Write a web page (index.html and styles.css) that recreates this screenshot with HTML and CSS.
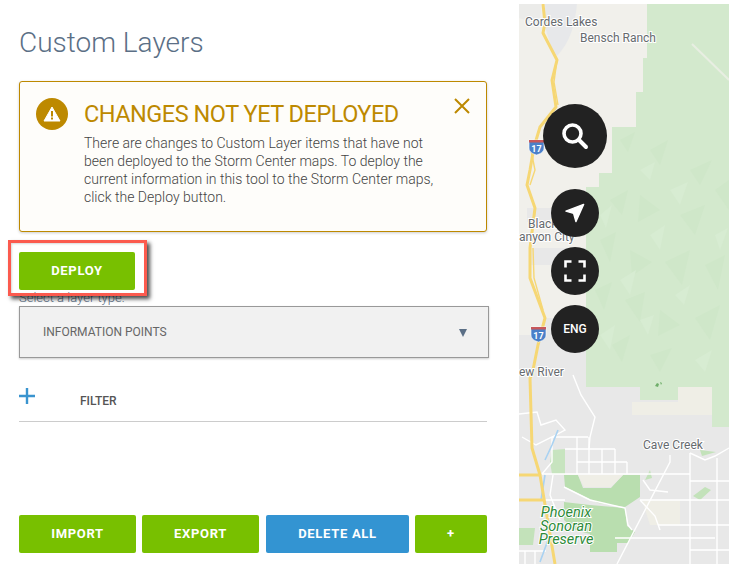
FILE: index.html
```html
<!DOCTYPE html>
<html>
<head>
  <title>Custom Layers</title>
  <link rel="stylesheet" href="styles.css">
</head>
<body>

<div class="page">
  <div class="panel">
    <h1>Custom Layers</h1>

    <div class="alert">
      <div class="alert-icon">
        <svg width="18" height="16" viewBox="0 0 18 16"><path d="M9 1 17 15H1Z" fill="#fff" stroke="#fff" stroke-linejoin="round"/><rect x="8" y="5" width="2" height="5.5" fill="#bd8900"/><rect x="8" y="11.5" width="2" height="2" fill="#bd8900"/></svg>
      </div>
      <div class="alert-body">
        <h2>CHANGES NOT YET DEPLOYED</h2>
        <p>There are changes to Custom Layer items that have not been deployed to the Storm Center maps. To deploy the current information in this tool to the Storm Center maps, click the Deploy button.</p>
      </div>
      <svg class="alert-close" width="16" height="16" viewBox="0 0 16 16"><path d="M1 1 15 15M15 1 1 15" stroke="#bd8900" stroke-width="2" fill="none"/></svg>
    </div>

    <div class="deploy-row">
      <button class="btn btn-deploy">DEPLOY</button>
    </div>

    <label class="select-label">Select a layer type:</label>
    <div class="highlight"></div>
    <div class="select">
      <span>INFORMATION POINTS</span>
      <span class="arrow"></span>
    </div>

    <div class="filter-row">
      <svg class="add" width="16" height="16" viewBox="0 0 16 16"><path d="M8 0V16M0 8H16" stroke="#3a94cf" stroke-width="2.4"/></svg>
      <span class="filter">FILTER</span>
    </div>

    <div class="actions">
      <button class="btn btn-import">IMPORT</button>
      <button class="btn btn-export">EXPORT</button>
      <button class="btn btn-delete">DELETE ALL</button>
      <button class="btn btn-add">+</button>
    </div>
  </div>

  <div class="map">
    <svg class="map-art" width="210" height="560" viewBox="519 4 210 560">
      <rect x="519" y="4" width="210" height="560" fill="#f1f0eb"/>
      <!-- grey built up areas -->
      <path d="M519 335H540L545 318H590V564H519Z" fill="#e8e8e8"/>
      <path d="M590 380H729V564H590Z" fill="#e8e8e8"/>
      <path d="M527 208H590V222H527ZM530 248H590V265H530Z" fill="#e8e8e8"/>
      <path d="M545 4H577C575 25 570 42 557 56L552 50 546 30Z" fill="#e7e8ea"/>
      <path d="M519 4H541L540 24 519 18Z" fill="#ebebe9"/>
      <!-- forest -->
      <path d="M647 4V58H643V92H636V127H612V173H599V187H586V387H640V400H678V387H712V427H729V4Z" fill="#d3e9cd"/>
      <g fill="#cfe7c9">
        <path d="M620 140 635 132 628 152ZM650 150 668 140 660 165ZM690 170 712 160 700 185ZM610 200 628 190 622 215ZM640 195 660 210 638 222ZM680 215 705 205 695 235ZM715 190 729 180V210Z"/>
        <path d="M600 240 616 232 610 262ZM630 250 652 262 632 276ZM665 262 690 250 682 285ZM705 265 725 255 718 290ZM595 290 612 282 604 310ZM625 300 645 292 640 322ZM660 310 680 325 658 336ZM695 318 720 305 710 340ZM612 345 630 335 622 362ZM650 355 672 348 660 372Z"/>
      </g>
      <g fill="#d7ecd2">
        <path d="M640 170 655 162 650 180ZM600 215 612 205 606 228ZM670 190 688 182 680 205ZM650 235 665 225 660 250ZM715 235 728 228 720 250ZM620 280 636 270 630 295ZM675 295 690 285 684 305ZM600 335 615 325 610 350ZM695 360 712 350 705 372ZM640 320 654 315 648 335Z"/>
      </g>
      <path d="M692 44 729 80" stroke="#e8eee2" stroke-width="2"/>
      <path d="M632 402H712V415H632Z" fill="#efeee6"/>
      <path d="M678 387H712V415H678Z" fill="#efeee6"/>
      <path d="M655 386l2-3 2 1-1 3ZM660 382l2 1-1 2Z" fill="#6fae6a"/>
      <!-- preserve -->
      <path d="M564 475H578L583 488H611L623 475H640V497L625 507 598 503 565 487Z" fill="#b9deaf"/>
      <path d="M564 502 590 505 625 508 627 526 635 532 628 543H617V552H590V534L575 530 564 520Z" fill="#b9deaf"/>
      <path d="M578 475H602V487H584ZM602 475H623L611 487H602Z" fill="#efeee6"/>
      <path d="M642 500H680V525H650Z" fill="#efeee6"/>
      <path d="M519 528H535L533 545H519ZM693 496 705 487 711 490 700 500ZM702 456 716 452 700 450ZM645 480 650 470 652 478Z" fill="#c3e2ba"/>
      <path d="M552 450 565 449V474L552 474 550 462Z" fill="#c7e4bf"/>
      <!-- local roads -->
      <g fill="none" stroke="#fff" stroke-width="1.4">
        <path d="M552 437H588M565 449H615M577 462H627M542 474H690M577 437V474M589 437V474M602 449V474M615 449V474M627 462V474"/>
        <path d="M573 375 581 395 595 417 590 437 589 449"/>
        <path d="M519 414 537 412 541 425 556 420 565 430 552 437 536 445 522 437"/>
        <path d="M552 437V462L542 474"/>
        <path d="M670 455V462L617 564"/>
        <path d="M690 453 705 460 715 456 729 448"/>
        <path d="M690 453V564M717 458V564M690 481H729M640 500H729M658 525H729M615 538H715M690 550H729M519 551H546M525 551V564M535 551V564"/>
        <path d="M564 487 590 500 625 508 628 525 632 530M643 480 650 490 668 492M640 500 655 516 660 530"/>
        <path d="M553 475 550 495 560 520M565 500H535"/>
      </g>
      <path d="M558 430 552 445 545 460M545 475 541 500M548 540 540 562" fill="none" stroke="#a9d2f2" stroke-width="1.6"/>
      <!-- highway -->
      <g fill="none" stroke="#f6d774" stroke-width="3" stroke-linejoin="round">
        <path d="M543 4 545 23 543 33 557 60 552 80 556 107 540 127 534 147 530 170 527 185 535 208 530 248 530 278 545 318 538 345 532 375 530 378 532 448 540 475 555 564"/>
        <path d="M519 475H540M519 500H544"/>
      </g>
      <path d="M557 60 554 82 558 105M533 248 534 278 543 310M531 150 535 170 530 185" fill="none" stroke="#f6d774" stroke-width="1.4"/>
      <!-- labels -->
      <g class="map-label">
        <text x="525" y="26">Cordes Lakes</text>
        <text x="580" y="42">Bensch Ranch</text>
        <text x="528" y="228">Black</text>
        <text x="519" y="241">anyon City</text>
        <text x="519" y="376">ew River</text>
        <text x="643" y="449">Cave Creek</text>
      </g>
      <g class="map-label park">
        <text x="566" y="517" text-anchor="middle">Phoenix</text>
        <text x="566" y="531" text-anchor="middle">Sonoran</text>
        <text x="566" y="544" text-anchor="middle">Preserve</text>
      </g>
      <!-- I-17 shields -->
      <g>
        <path d="M529 140H544V148C544 152 540 154 536.500 155 533 154 529 152 529 148Z" fill="#4a80c9" stroke="#fff" stroke-width=".6"/>
        <rect x="529" y="140" width="15" height="2.500" fill="#c8585a"/>
        <text class="shield-text" x="536.500" y="152">17</text>
      </g>
      <g>
        <path d="M531 327H546V335C546 339 542 341 538.500 342 535 341 531 339 531 335Z" fill="#4a80c9" stroke="#fff" stroke-width=".6"/>
        <rect x="531" y="327" width="15" height="2.500" fill="#c8585a"/>
        <text class="shield-text" x="538.500" y="339">17</text>
      </g>
    </svg>

    <div class="map-controls">
      <div class="map-btn map-btn-search">
        <svg width="30" height="30" viewBox="0 0 30 30"><circle cx="12.500" cy="12.500" r="8.500" fill="none" stroke="#fff" stroke-width="3.600"/><path d="M19 19 26 26" stroke="#fff" stroke-width="4" stroke-linecap="round"/></svg>
      </div>
      <div class="map-btn map-btn-nav">
        <svg width="20" height="20" viewBox="0 0 22 22"><path d="M20.500 1.500 12 20.500 9.500 11.500 1 9Z" fill="#fff" stroke="#fff" stroke-width="1.500" stroke-linejoin="round"/></svg>
      </div>
      <div class="map-btn map-btn-full">
        <svg width="22" height="22" viewBox="0 0 22 22"><path d="M1.500 7.500V1.500H7.500M14.500 1.500H20.500V7.500M20.500 14.500V20.500H14.500M7.500 20.500H1.500V14.500" fill="none" stroke="#fff" stroke-width="2.600"/></svg>
      </div>
      <div class="map-btn map-btn-lang">ENG</div>
    </div>
  </div>
</div>

</body>
</html>
```

FILE: styles.css
```css
* {
  box-sizing: border-box;
}
body {
  margin: 0;
  background: #fff;
  font-family: Roboto, "Liberation Sans", sans-serif;
  overflow: hidden;
}
.page {
  display: flex;
  height: 564px;
}
.panel {
  position: relative;
  width: 519px;
  padding-left: 19px;
}
h1 {
  margin: 0;
  padding-top: 25px;
  height: 81px;
  font-size: 28px;
  line-height: 36px;
  font-weight: 300;
  color: #5b6f86;
}
.alert {
  position: relative;
  display: flex;
  width: 468px;
  height: 151px;
  padding: 16px 0 0 16px;
  background: #fefdfa;
  border: 1px solid #bd8900;
  border-radius: 3px;
  box-shadow: 0 1px 3px rgba(0, 0, 0, 0.2);
}
.alert-icon {
  display: flex;
  align-items: center;
  justify-content: center;
  flex: none;
  width: 32px;
  height: 32px;
  border-radius: 50%;
  background: #bd8900;
}
.alert-body {
  margin-left: 16px;
  width: 360px;
}
h2 {
  margin: 2px 0 0;
  font-size: 23.5px;
  line-height: 28px;
  font-weight: 400;
  letter-spacing: -0.5px;
  color: #bd8900;
  white-space: nowrap;
}
.alert p {
  margin: 6px 0 0;
  font-size: 14px;
  line-height: 18px;
  font-weight: 300;
  color: #444;
}
.alert-close {
  position: absolute;
  top: 16px;
  right: 16px;
}
.btn {
  height: 38px;
  padding: 0 0 2px;
  border: none;
  border-radius: 2px;
  color: #fff;
  font-family: Roboto, sans-serif;
  font-size: 13px;
  font-weight: 700;
  letter-spacing: 0.7px;
  cursor: pointer;
}
.deploy-row {
  margin-top: 20px;
}
.btn-deploy {
  display: block;
  width: 116px;
  background: #78c000;
}
.select-label {
  display: block;
  height: 16px;
  font-size: 13px;
  line-height: 16px;
  font-weight: 300;
  color: #5b6f86;
}
.highlight {
  position: absolute;
  left: 8px;
  top: 240px;
  width: 139px;
  height: 56px;
  border: 3px solid #fb5a4e;
  box-shadow: 3px 3px 4px rgba(0, 0, 0, 0.7), inset 1px 1px 2px rgba(0, 0, 0, 0.15);
}
.select {
  display: flex;
  align-items: center;
  justify-content: space-between;
  width: 470px;
  height: 52px;
  padding: 0 21px 0 23px;
  background: #f1f1f1;
  border: 1px solid #999;
  box-shadow: 0 1px 2px rgba(0, 0, 0, 0.2);
  font-size: 12px;
  color: #666;
}
.arrow {
  width: 0;
  height: 0;
  margin-top: 2px;
  border-left: 4.5px solid transparent;
  border-right: 4.5px solid transparent;
  border-top: 8px solid #5b6f86;
}
.filter-row {
  position: relative;
  width: 468px;
  height: 64px;
  border-bottom: 1px solid #ccc;
}
.add {
  position: absolute;
  left: 0;
  top: 30px;
}
.filter {
  position: absolute;
  left: 61px;
  top: 36px;
  font-size: 12px;
  line-height: 14px;
  font-weight: 500;
  color: #555;
}
.actions {
  display: flex;
  gap: 6px;
  width: 468px;
  margin-top: 93px;
}
.btn-import, .btn-export {
  width: 117px;
  background: #78c000;
}
.btn-delete {
  width: 143px;
  margin-left: 1px;
  background: #3394d2;
}
.btn-add {
  flex: 1;
  background: #78c000;
}
.map {
  position: relative;
  flex: none;
  width: 210px;
  height: 560px;
  margin-top: 4px;
  overflow: hidden;
}
.map-art {
  display: block;
}
.map-label text {
  font-family: Roboto, sans-serif;
  font-size: 12px;
  fill: #666a6e;
  stroke: #fff;
  stroke-width: 2px;
  paint-order: stroke;
}
.map-label.park text {
  font-size: 14.5px;
  font-style: italic;
  fill: #2e8b3a;
}
.shield-text {
  font-family: Roboto, sans-serif;
  font-size: 9px;
  font-weight: 700;
  fill: #fff;
  text-anchor: middle;
}
.map-controls {
  position: absolute;
  left: 24px;
  top: 100px;
  display: flex;
  flex-direction: column;
  align-items: center;
  width: 64px;
}
.map-btn {
  display: flex;
  align-items: center;
  justify-content: center;
  width: 48px;
  height: 48px;
  border-radius: 50%;
  background: #222;
  color: #fff;
  font-size: 12px;
  font-weight: 500;
}
.map-btn-search {
  width: 64px;
  height: 64px;
}
.map-btn-nav {
  margin-top: 21px;
}
.map-btn-full {
  margin-top: 10px;
}
.map-btn-lang {
  margin-top: 10px;
}
```
